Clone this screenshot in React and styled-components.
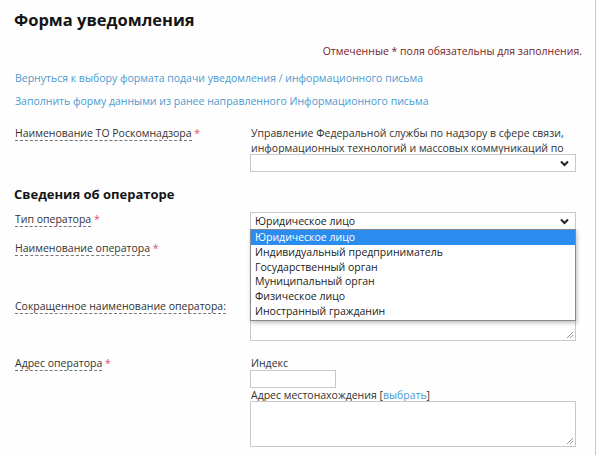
import React from 'react';
import styled, { createGlobalStyle } from 'styled-components';

const GlobalStyle = createGlobalStyle`
    html, body {
        margin: 0;
        padding: 0;
        background: #ffffff;
    }
    body {
        font-family: "Open Sans", "Liberation Sans", sans-serif;
        font-size: 10.5px;
        color: #333;
    }
`;

const Page = styled.div`
    width: 596px;
    height: 455px;
    box-sizing: border-box;
    border-right: 1px solid #c8c8c8;
    padding: 6px 0 0 14px;
    overflow: hidden;
    background: #fefefe;
`;

const Title = styled.h1`
    margin: 0;
    font-size: 16.5px;
    line-height: 28px;
    font-weight: 700;
    color: #151515;
`;

const Note = styled.div`
    text-align: right;
    padding-right: 13px;
    margin-top: 10px;
    line-height: 15px;
    color: #7a1c28;
`;

const Star = styled.span`
    color: #e0506c;
`;

const LinkLine = styled.a`
    display: block;
    margin-top: ${p => p.$gap || 0}px;
    margin-left: 1px;
    line-height: 15px;
    color: #4c9bd0;
    text-decoration: none;
`;

const Row = styled.div`
    display: grid;
    grid-template-columns: 236px 326px;
    margin-top: ${p => p.$gap || 0}px;
`;

const LabelCell = styled.div`
    padding-top: ${p => p.$pad || 0}px;
    padding-left: 1px;
    line-height: 15px;
    color: #333;
`;

const Dashed = styled.span`
    border-bottom: 1px dashed #777;
`;

const FieldCell = styled.div`
    position: relative;
    display: flex;
    flex-direction: column;
`;

const HelpText = styled.div`
    line-height: 15px;
    color: #333;
    padding-left: 1px;
    white-space: nowrap;
`;

const SelectBox = styled.div`
    position: relative;
    height: 18px;
    box-sizing: border-box;
    border: 1px solid #c9c9c9;
    background: #fff;
    display: flex;
    align-items: center;
    padding: 0 4px;
    line-height: 15px;
    color: #222;
    margin-top: ${p => p.$gap || 0}px;
`;

const Chevron = styled.svg`
    position: absolute;
    right: 6px;
    top: 5px;
`;

const Menu = styled.ul`
    position: absolute;
    z-index: 5;
    top: 16px;
    left: -1px;
    width: 326px;
    margin: 0;
    padding: 0 0 1px;
    list-style: none;
    background: #fff;
    border: 1px solid #8a8a8a;
    box-sizing: border-box;
    box-shadow: 1px 2px 4px rgba(0, 0, 0, 0.25);
`;

const MenuItem = styled.li`
    height: 14.8px;
    line-height: 14.8px;
    padding: 0 4px;
    color: ${p => (p.$active ? '#fff' : '#222')};
    background: ${p => (p.$active ? '#2b8cf0' : 'transparent')};
`;

const TextArea = styled.div`
    position: relative;
    height: ${p => p.$h || 45}px;
    box-sizing: border-box;
    border: 1px solid #c9c9c9;
    background: #fff;
    margin-top: ${p => p.$gap || 0}px;
`;

const Grip = styled.svg`
    position: absolute;
    right: 1px;
    bottom: 1px;
`;

const SmallInput = styled.div`
    width: 86px;
    height: 18px;
    box-sizing: border-box;
    border: 1px solid #c9c9c9;
    background: #fff;
    margin-top: -1px;
`;

const SubLabel = styled.div`
    line-height: 15px;
    color: #333;
    margin-top: ${p => p.$gap || 0}px;
    padding-left: 1px;
`;

const InlineLink = styled.a`
    color: #4c9bd0;
    text-decoration: none;
`;

const Section = styled.h2`
    margin: 12px 0 0;
    font-size: 13px;
    line-height: 20px;
    font-weight: 700;
    color: #151515;
`;

const ChevronIcon = () => (
    <Chevron width="9" height="7" viewBox="0 0 9 7">
        <path d="M1 1.5 L4.5 5 L8 1.5" fill="none" stroke="#222" strokeWidth="2" />
    </Chevron>
);

const GripIcon = () => (
    <Grip width="8" height="8" viewBox="0 0 8 8">
        <path d="M7 1 L1 7 M7 4 L4 7" stroke="#999" strokeWidth="1" />
    </Grip>
);

const operatorTypes = [
    'Юридическое лицо',
    'Индивидуальный предприниматель',
    'Государственный орган',
    'Муниципальный орган',
    'Физическое лицо',
    'Иностранный гражданин',
];

const App = () => {
    return (
        <Page>
            <GlobalStyle />
            <Title>Форма уведомления</Title>
            <Note>Отмеченные * поля обязательны для заполнения.</Note>
            <LinkLine href="#" $gap={12}>
                Вернуться к выбору формата подачи уведомления / информационного письма
            </LinkLine>
            <LinkLine href="#" $gap={8}>
                Заполнить форму данными из ранее направленного Информационного письма
            </LinkLine>

            <Row $gap={17}>
                <LabelCell>
                    <Dashed>Наименование ТО Роскомнадзора</Dashed> <Star>*</Star>
                </LabelCell>
                <FieldCell>
                    <HelpText>
                        Управление Федеральной службы по надзору в сфере связи,
                        <br />
                        информационных технологий и массовых коммуникаций по
                    </HelpText>
                    <SelectBox $gap={-2}>
                        <ChevronIcon />
                    </SelectBox>
                </FieldCell>
            </Row>

            <Section>Сведения об операторе</Section>

            <Row $gap={8}>
                <LabelCell>
                    <Dashed>Тип оператора</Dashed> <Star>*</Star>
                </LabelCell>
                <FieldCell>
                    <SelectBox>
                        Юридическое лицо
                        <ChevronIcon />
                        <Menu>
                            {operatorTypes.map((t, i) => (
                                <MenuItem key={t} $active={i === 0}>{t}</MenuItem>
                            ))}
                        </Menu>
                    </SelectBox>
                </FieldCell>
            </Row>

            <Row $gap={11}>
                <LabelCell $pad={0}>
                    <Dashed>Наименование оператора</Dashed> <Star>*</Star>
                </LabelCell>
                <FieldCell>
                    <TextArea $h={45}>
                        <GripIcon />
                    </TextArea>
                </FieldCell>
            </Row>

            <Row $gap={10}>
                <LabelCell $pad={3}>
                    <Dashed>Сокращенное наименование оператора:</Dashed>
                </LabelCell>
                <FieldCell>
                    <TextArea $h={45}>
                        <GripIcon />
                    </TextArea>
                </FieldCell>
            </Row>

            <Row $gap={15}>
                <LabelCell>
                    <Dashed>Адрес оператора</Dashed> <Star>*</Star>
                </LabelCell>
                <FieldCell>
                    <SubLabel>Индекс</SubLabel>
                    <SmallInput />
                    <SubLabel $gap={0}>
                        Адрес местонахождения [<InlineLink href="#">выбрать</InlineLink>]
                    </SubLabel>
                    <TextArea $h={46} $gap={-2}>
                        <GripIcon />
                    </TextArea>
                </FieldCell>
            </Row>
        </Page>
    );
};

export default App;
